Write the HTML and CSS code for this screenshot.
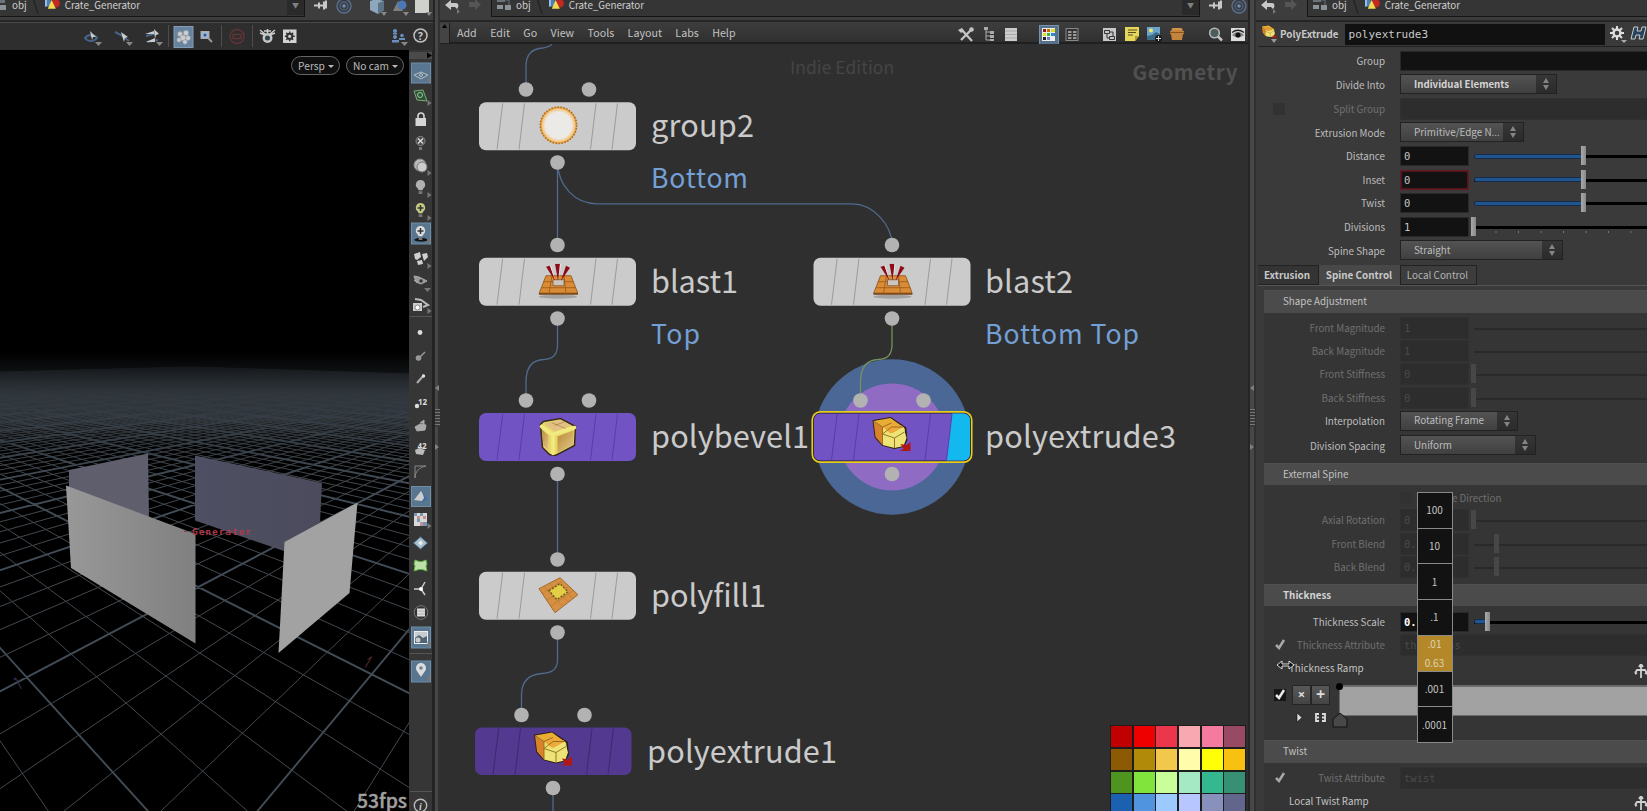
FILE: index.html
```html
<!DOCTYPE html>
<html lang="en">
<head>
<meta charset="utf-8">
<title>Crate_Generator</title>
<link rel="stylesheet" href="styles.css">
</head>
<body>
<svg class="defs" width="0" height="0">
  <defs>
    <linearGradient id="fade" x1="0" y1="300" x2="0" y2="430" gradientUnits="userSpaceOnUse">
      <stop offset="0" stop-color="#000"/><stop offset=".32" stop-color="#777"/><stop offset=".6" stop-color="#bbb"/><stop offset="1" stop-color="#fff"/>
    </linearGradient>
    <mask id="fadeMask" maskUnits="userSpaceOnUse" x="0" y="0" width="409" height="761"><rect width="409" height="761" fill="url(#fade)"/></mask>
    <linearGradient id="wallL"><stop offset="0" stop-color="#989898"/><stop offset="1" stop-color="#808080"/></linearGradient>
    <linearGradient id="wallB"><stop offset="0" stop-color="#4f4f63"/><stop offset="1" stop-color="#4b4b5d"/></linearGradient>
    <linearGradient id="gold" x1="0" y1="0" x2="1" y2="1"><stop offset="0" stop-color="#b98a34"/><stop offset="1" stop-color="#e3c88c"/></linearGradient>
    <radialGradient id="glow"><stop offset=".72" stop-color="#eceae6"/><stop offset=".88" stop-color="#f3c98a"/><stop offset="1" stop-color="#df8a20"/></radialGradient>
    <symbol id="i-geo" viewBox="0 0 18 16"><rect x="1" y="0" width="6" height="9" fill="#4f7fb8"/><path d="M1 0h2v9H1z" fill="#9cc0e8"/><circle cx="12.500" cy="5.500" r="4.500" fill="#c02a20"/><path d="M8 2l4.500 9.500H4z" fill="#f0dc50"/></symbol>
    <symbol id="i-obj" viewBox="0 0 16 14"><rect x="1" y="0" width="8" height="4" fill="#68747a"/><rect x="1" y="7" width="6" height="4" fill="#8a9296"/><rect x="9" y="7" width="6" height="5" fill="#8a9296"/><path d="M9 2h4v5" stroke="#68747a" fill="none"/></symbol>
    <symbol id="i-back" viewBox="0 0 16 14"><path d="M0 5l6-5v3h5c3 0 3 4 1 6l-2-2H6v3z" fill="#c8c8c8"/><path d="M12 9l3 2.500-3 2.500z" fill="#777"/></symbol>
    <symbol id="i-fwd" viewBox="0 0 14 12"><path d="M13 5.500L7 0v3H1v5h6v3z" fill="#555"/></symbol>
    <symbol id="i-pin" viewBox="0 0 14 10"><path d="M0 5h5M5 2v6M5 5h5M10 1v8M12 0v8" stroke="#c8c8c8" stroke-width="2"/></symbol>
    <symbol id="i-link" viewBox="0 0 16 16"><circle cx="8" cy="8" r="7" fill="none" stroke="#5c7498" stroke-width="1.300"/><circle cx="8" cy="8" r="4" fill="none" stroke="#4c6488" stroke-width="1.300"/><circle cx="8" cy="8" r="1.800" fill="#6b8ab8"/></symbol>
    <symbol id="i-extr" viewBox="0 0 40 36"><path d="M2 4L19 1l15 10 1 12-3 6-9 2-12-3-7-8z" fill="#eee070" stroke="#2a2010" stroke-width="1.800"/><path d="M2 4l9 6v18l-7-8z" fill="#d9822a"/><path d="M2 4L19 1l14 10-12-1-10 0z" fill="#e9ac34"/><path d="M11 10l10-4 10 3 2 4-12 5z" fill="#efa93a"/><path d="M11 17l10-1 11-6 3 11-3 8-9 2-12-3z" fill="#ede376"/><path d="M11 17l12 4 10-6M23 21v10M11 10v18M2 4l9 6 9-4M11 17l9-7 12 0" fill="none" stroke="#8a6a20" stroke-width=".9"/><path d="M29 27l6 1 4-3v9H28l4-2z" fill="#b01818"/></symbol>
    <symbol id="i-blast" viewBox="0 0 40 36"><ellipse cx="20" cy="33" rx="19" ry="2" fill="#a2a2a2"/><path d="M8 12h25l7 18H1z" fill="#d98b35" stroke="#8a5018" stroke-width=".8"/><path d="M1 29h39v2H1z" fill="#7c4a1c"/><path d="M5.500 18h30M3.500 24h34M14 12l-3 18M26 12l2 18" stroke="#a35e1a" stroke-width=".9" fill="none"/><path d="M15 16h11v6H15z" fill="#cdc4bc" stroke="#7a5a40" stroke-width=".8"/><path d="M8 3l4-1 5 15zM17 0h5l-2 17zM28 2l4 2-9 13z" fill="#8d0b18"/><path d="M12 2l1 0 4 14zM22 0h1l-2 16z" fill="#f3e6e6"/></symbol>
    <symbol id="i-bulb" viewBox="0 0 14 18"><path d="M7 1a5 5 0 0 1 3 9l-1 2H5l-1-2A5 5 0 0 1 7 1z" fill="currentColor"/><path d="M5 13h4v3H5z" fill="#777"/></symbol>
    <symbol id="i-ramp" viewBox="0 0 14 14"><path d="M7 0v14M5 3l2-3 2 3M1 9l2-3h8l2 3M1 10l2-1M13 10l-2-1" stroke="#d0d0d0" stroke-width="1.800" fill="none"/></symbol>
  </defs>
</svg>

<div class="app">
  <section class="pane view-pane">
    <header class="path">
      <div class="path-field left"><svg width="8" height="14"><rect y="1" width="5" height="4" fill="#68747a"/><rect y="7" width="6" height="5" fill="#8a9296"/></svg><span class="p-obj">obj</span><i class="chev"></i><svg width="17" height="15"><use href="#i-geo"/></svg><span>Crate_Generator</span><b class="drop">▼</b></div>
      <svg class="pin" width="14" height="11"><use href="#i-pin"/></svg>
      <svg class="lnk" width="16" height="16"><use href="#i-link"/></svg>
      <svg class="cubes" width="64" height="16"><path d="M1 1l6-2 8 2v9l-6 4-8-4z" fill="#8fa7bd"/><path d="M9 3v11l6-4V1z" fill="#5c7487"/><path d="M12 12h6l-3 4z" fill="#888"/><path d="M24 11l5-10 5 10z" fill="#808080"/><circle cx="33" cy="5" r="4.500" fill="#4b79b8"/><path d="M34 12h6l-3 4z" fill="#888"/><path d="M46 0h14v13H46z" fill="#d0d0cc"/><path d="M57 12h6l-3 4z" fill="#888"/></svg>
    </header>
    <div class="viewbar">
      <svg width="353" height="28" viewBox="80 22 353 28">
        <g fill="none" stroke="#486488" stroke-width="2"><path d="M85 38c3-4 10-4 12 0-3 4-9 4-12 0z"/><path d="M115 32l6 3 8 6"/><path d="M146 36l12-3M147 42l11-2"/></g>
        <g fill="#ccc"><path d="M90 31l6 6-3 0-1 3zM121 32l7 5-3 1-1 4zM154 29l5 5-3 1-1 4zM145 34l9-3v3zM146 42l9-4v4z"/></g>
        <g fill="#888"><path d="M95 42h7l-3.500 4zM126 42h7l-3.500 4zM156 42h7l-3.500 4zM401 42h7l-3.500 4z"/></g>
        <path d="M168.500 25v22M221.500 25v22M252.500 25v22" stroke="#4e4e4e"/>
        <rect x="174" y="26.500" width="19" height="21" fill="#66839f" stroke="#829db5"/>
        <g fill="#ccc" stroke="#8a98a4" stroke-width=".6"><circle cx="180" cy="34" r="2.500"/><circle cx="186" cy="33" r="2.700"/><circle cx="183" cy="38" r="3"/><circle cx="188" cy="38" r="2.500"/><circle cx="179" cy="40" r="2.200"/><circle cx="185" cy="42" r="2.300"/></g>
        <rect x="201" y="31.500" width="8" height="7" fill="#9fb6d0" stroke="#aaa"/><circle cx="205" cy="35" r="1.500" fill="#305888"/><path d="M208 38l4 4" stroke="#999" stroke-width="2"/>
        <circle cx="237" cy="36.500" r="7" fill="none" stroke="#5f3436" stroke-width="1.500"/><rect x="233" y="34.500" width="8" height="4" fill="none" stroke="#5f3436" stroke-width="1.500"/>
        <circle cx="267.500" cy="38" r="5" fill="#c5c5c5"/><circle cx="267.500" cy="38" r="2.500" fill="#2c4450"/><path d="M260 30l5 4M275 30l-5 4M260 33l5 2M275 33l-5 2M264 31h7M267.500 29v4" stroke="#ccc" stroke-width="1.500"/>
        <rect x="283" y="29.500" width="13.500" height="13.500" fill="#d2d2d2"/><circle cx="289.700" cy="36.300" r="2.600" fill="none" stroke="#333" stroke-width="2"/><path d="M289.700 31.500v2M289.700 39.300v2M284.900 36.300h2M292.700 36.300h2M286.300 32.900l1.500 1.500M291.600 38.200l1.500 1.500M293.100 32.900l-1.500 1.500M287.800 38.200l-1.500 1.500" stroke="#333" stroke-width="1.500"/>
        <g fill="#6b8fc0"><circle cx="395" cy="31" r="2"/><circle cx="395" cy="37" r="2"/><circle cx="402" cy="35.500" r="1.800"/><path d="M392 40h7v2.500h-7zM399 38h6v2h-6zM393 33h4v1.500h-4z"/></g>
        <circle cx="420.500" cy="35.500" r="6.500" fill="#333" stroke="#c0c0c0" stroke-width="1.500"/><text x="420.500" y="39.500" class="q">?</text>
      </svg>
    </div>
    <div class="view-row">
      <div class="viewport">
        <svg width="409" height="761">
          <defs><linearGradient id="haze" x1="0" y1="0" x2="0" y2="1"><stop offset="0" stop-color="#000"/><stop offset=".45" stop-color="#202326"/><stop offset=".65" stop-color="#1e2227"/><stop offset="1" stop-color="#000"/></linearGradient></defs>
          <rect y="302" width="409" height="98" fill="url(#haze)"/>
          <g mask="url(#fadeMask)"><path id="minor" class="g-minor"/><path id="major" class="g-major"/></g>
          <g transform="translate(0,-50)">
            <path d="M69 470L148 453.500 149 517 69 500z" fill="#5f5e6d"/>
            <path d="M195 455.500L322 483 320 522 284 551 195 520.500z" fill="url(#wallB)"/>
            <path d="M66 485.500L195.500 534v109.500L71 568z" fill="url(#wallL)"/>
            <path d="M284.500 542L357.500 502.500 349.500 593 278.500 653z" fill="#a2a2a2"/>
            <text x="192" y="535" class="gen" textLength="59">Generator</text><path d="M184 531.500h3" stroke="#a33040"/>
            <text class="ax red" transform="translate(361,668) rotate(-8) skewX(-38)">1</text>
            <text class="ax pur" transform="translate(17,688) rotate(10) skewX(38)">1</text>
            <text x="357" y="808" class="fps" textLength="50" lengthAdjust="spacingAndGlyphs">53fps</text>
          </g>
        </svg>
        <div class="pills"><span>Persp<i></i></span><span>No cam<i></i></span></div>
      </div>
      <div class="sidebar">
        <svg width="24" height="761" viewBox="409 50 24 761">
          <rect x="409" y="52" width="23" height="7" fill="#4a4a4a"/><path d="M427 52.500l5 3-5 3z" fill="#000"/>
          <g fill="#58768f" stroke="#6d8da8"><rect x="411.500" y="63" width="19" height="20"/><rect x="411.500" y="223" width="19" height="21"/><rect x="411.500" y="486.500" width="19" height="20"/><rect x="411.500" y="627" width="19" height="21"/><rect x="411.500" y="661" width="19" height="21"/></g>
          <path d="M410 316.500h22M410 653.500h22M410 791.500h22" stroke="#555"/>
          <g fill="none" stroke="#b8bcc0"><path d="M414 75l7-3 7 3-7 4z"/><circle cx="421" cy="75" r="1.500"/></g>
          <path d="M414 91l9-1 4 11-10-1z" fill="#31503a" stroke="#77ab70"/><circle cx="420" cy="95" r="2.500" fill="none" stroke="#9c9"/>
          <rect x="415.500" y="118" width="10.500" height="8" fill="#d4d4d4"/><path d="M418 118v-2a3 3 0 0 1 6 0v2" fill="none" stroke="#d4d4d4" stroke-width="1.600"/>
          <circle cx="420.500" cy="141" r="4.500" fill="#4a4a4a" stroke="#888"/><path d="M418 138.500l5 5M423 138.500l-5 5" stroke="#ddd" stroke-width="1.400"/><path d="M419 147h3v3h-3z" fill="#777"/>
          <circle cx="420" cy="165" r="6" fill="#bbb" stroke="#888"/><circle cx="422" cy="167" r="5" fill="#ccc" stroke="#777"/>
          <g color="#b0b0b0"><use href="#i-bulb" x="414" y="179" width="13" height="17"/></g>
          <g color="#c6cb84"><use href="#i-bulb" x="414" y="202" width="13" height="17"/></g><path d="M420.500 205v6M417.500 208h6" stroke="#333" stroke-width="1.500"/>
          <path d="M414 240c3-3 11-3 14 0-3 2-11 2-14 0z" fill="#111"/><g color="#ddd"><use href="#i-bulb" x="414" y="225" width="13" height="17"/></g><path d="M420.500 228v6M417.500 231h6" stroke="#333" stroke-width="1.500"/>
          <path d="M414 254l6-2 1 5-4 3-2-1zM422 254l5-1 1 4-4 4zM417 261l5-1 1 4-5 1z" fill="#d0d0d0"/>
          <path d="M414 276l5 1 8 4-6 3-5-2zM414 280l4 3" fill="#999" stroke="#aaa"/><circle cx="421" cy="281" r="1.700" fill="#333"/>
          <path d="M413 303h9v8h-9z" fill="#ccc"/><path d="M415 299l6 1 7 5-5 2" fill="none" stroke="#bbb" stroke-width="2"/><circle cx="417.500" cy="307.500" r="2.500" fill="#fff" stroke="#888"/>
          <circle cx="420" cy="332.500" r="2.400" fill="#ddd"/>
          <path d="M425 352l-5 5" stroke="#999" stroke-width="1.500"/><circle cx="418.500" cy="358" r="2.800" fill="#999"/>
          <path d="M417 383l7-8" stroke="#aaa" stroke-width="2"/><circle cx="423.500" cy="376" r="1.700" fill="#ddd"/>
          <text x="418" y="405" class="num">12</text><circle cx="417" cy="406" r="2.200" fill="#ddd"/>
          <path d="M415 427l5-3 6 1-1 5-8 1zM420 423l4-3v4" fill="#aaa" stroke="#aaa"/>
          <text x="417.500" y="449" class="num">42</text><path d="M415 450l4-2 6 2-2 5-7-1z" fill="#bbb"/>
          <path d="M415 478v-12h11M415 478c0-7 5-11 11-12" fill="none" stroke="#888"/>
          <path d="M414 500l7-9 5 8-4 2z" fill="#ccc"/><path d="M422 491l5 8-4 3-1-1 2-3z" fill="#3f6ca4"/>
          <rect x="414" y="513" width="13" height="13" fill="#d8d8d8"/><g fill="#7794b4"><path d="M414 513h3v3h-3zM420 513h3v3h-3zM417 519h3v3h-3zM423 522h4v4h-4z"/></g><path d="M417 516h3v3h-3zM423 516h3v3h-3zM420 522h3v4h-3z" fill="#c29292"/>
          <path d="M420.500 537l7 6-7 6-7-6z" fill="#a9bfcd" stroke="#4f7694"/><path d="M418 543l2.500-2.500 2.500 2.500-2.500 2.500z" fill="#eee"/>
          <path d="M415 560l4 1.500h3l4-1.500 1 4-1 2 1 5-5-1.500h-3l-5 1.500 1-5-1-2z" fill="#bde0a8" stroke="#5fae40"/>
          <path d="M421 589l4-7M421 589l4 6M421 589h-7" stroke="#ccc" stroke-width="1.500"/><circle cx="421" cy="589" r="2" fill="#fff"/>
          <circle cx="421" cy="612.500" r="6.800" fill="#333" stroke="#777"/><path d="M417 608.500h8v8h-8z" fill="#ddd"/><path d="M417 611h8M417 614h8" stroke="#999" stroke-width=".7"/>
          <rect x="414.500" y="631.500" width="13" height="12" fill="#c6ccd0" stroke="#eee"/><path d="M415 638l4-3 4 3 4-2v7h-12z" fill="#4f6474"/><circle cx="418" cy="640" r="2.500" fill="#ccc"/>
          <path d="M421 677c-3-5-5-6-5-9a5 5 0 0 1 10 0c0 3-2 4-5 9z" fill="#ddd"/><circle cx="421" cy="668" r="1.800" fill="#68849c"/>
          <circle cx="420.500" cy="805.500" r="6.200" fill="#333" stroke="#bbb" stroke-width="1.400"/><text x="420.500" y="809.500" class="info">i</text>
          <g fill="#777"><path d="M427.500 77l4 3-4 3zM427.500 100l4 3-4 3zM427.500 170l4 3-4 3zM427.500 192l4 3-4 3zM427.500 215l4 3-4 3zM427.500 238l4 3-4 3zM427.500 263l4 3-4 3zM424 288h7l-3.500 4zM427.500 308l4 3-4 3zM427.500 523l4 3-4 3zM427.500 641l4 3-4 3zM427.500 675l4 3-4 3z"/></g>
        </svg>
      </div>
    </div>
  </section>

  <div class="split"><i class="nub left"></i><span class="grip"></span><i class="nub right"></i></div>

  <section class="pane net-pane">
    <header class="path">
      <svg class="back" width="16" height="14"><use href="#i-back"/></svg><svg class="fwd" width="14" height="12"><use href="#i-fwd"/></svg>
      <div class="path-field"><svg width="16" height="14"><use href="#i-obj"/></svg><span class="p-obj">obj</span><i class="chev"></i><svg width="17" height="15"><use href="#i-geo"/></svg><span>Crate_Generator</span><b class="drop">▼</b></div>
      <svg class="pin" width="14" height="11"><use href="#i-pin"/></svg>
      <svg class="lnk" width="16" height="16"><use href="#i-link"/></svg>
    </header>
    <nav class="menu">
      <i class="handle">▲</i>
      <span>Add</span><span>Edit</span><span>Go</span><span>View</span><span>Tools</span><span>Layout</span><span>Labs</span><span>Help</span>
      <svg class="tools" width="298" height="22" viewBox="950 22 298 22">
        <path d="M961 28l11 12M972 28l-11 11" stroke="#c4c4c4" stroke-width="2.300"/><path d="M958 29l4-2 2 3-3 2z" fill="#c4c4c4"/><circle cx="971.500" cy="28.500" r="2.300" fill="#c4c4c4"/>
        <path d="M986 27v12h4M986 31h4M986 35h4" stroke="#aaa" fill="none"/><path d="M984 26h4v3h-4zM990 30h4v3h-4zM990 34h4v3h-4zM990 38h4v2h-4z" fill="#aaa"/>
        <path d="M1005 27h12v13h-12z" fill="#ccc"/><path d="M1005 30h12M1005 33.500h12M1005 37h12" stroke="#aaa"/>
        <rect x="1039.500" y="24.500" width="19" height="19" fill="#55718b" stroke="#7793ab"/><path d="M1042 27h13v13h-13z" fill="#eee"/>
        <path d="M1043 28h3v3h-3z" fill="#911"/><path d="M1047 28h3v3h-3z" fill="#c60"/><path d="M1051 28h4v3h-4zM1043 32h3v3h-3z" fill="#dd2"/><path d="M1047 32h3v3h-3z" fill="#3b3"/><path d="M1051 32h4v3h-4z" fill="#38c"/><path d="M1043 36h3v3h-3z" fill="#222"/><path d="M1047 36h3v3h-3z" fill="#77c"/>
        <rect x="1066" y="27.500" width="12" height="12" fill="#333" stroke="#888"/><path d="M1068 30h3.500v2h-3.500zM1073 30h3.500v2h-3.500zM1068 33h3.500v2h-3.500zM1073 33h3.500v2h-3.500zM1068 36h3.500v2h-3.500zM1073 36h3.500v2h-3.500z" fill="#999"/>
        <path d="M1103 27h13v13h-13z" fill="#c8c8c8"/><path d="M1104.500 29.500h5v3h-5zM1109.500 35.500h5v3h-5zM1110 31h3v4M1107 33v4h2" stroke="#333" fill="none"/>
        <path d="M1125 26h14v9l-4 5h-10z" fill="#e4d75a"/><path d="M1128 29h9M1128 31.500h8M1128 34h5" stroke="#554d20"/><path d="M1135 40v-5h4z" fill="#aa9d30"/>
        <path d="M1147 26h13v13h-13z" fill="#6ba4cc"/><path d="M1147 35l5-1 4-3 4 2v6h-13z" fill="#3c6b87"/><circle cx="1151" cy="29.500" r="2" fill="#f2e765"/><circle cx="1158.500" cy="37.500" r="3.500" fill="#181818"/><path d="M1156 37.500h5M1158.500 35v5" stroke="#ddd"/>
        <path d="M1172 27h10l1 3h1v3h-1l-1 6h-10l-1-6h-1v-3h1z" fill="#c3843c"/><path d="M1170 31.500h14" stroke="#8a5420"/><path d="M1173 28h8" stroke="#e0a560"/>
        <circle cx="1214.500" cy="32" r="4.800" fill="#4b5d5d" stroke="#b8b8b8" stroke-width="1.600"/><path d="M1218 35.500l4 4" stroke="#c5c5c5" stroke-width="2.500"/>
        <path d="M1231 27h14v13h-14z" fill="#ddd"/><path d="M1232 34c3-4 9-4 12 0-3 3-9 3-12 0z" fill="#888"/><path d="M1232 31.500c4-3 8-3 12 0" stroke="#222" stroke-width="1.300" fill="none"/><circle cx="1238" cy="34" r="2.600" fill="#111"/>
      </svg>
    </nav>
    <div class="canvas">
      <svg class="graph" width="808" height="767" viewBox="440 44 808 767">
        <defs>
          <g id="marks"><path d="M23.700 1L18 47M45.500 1L40 47M117 1l-5.500 46M138.500 1L133 47"/></g>
          <g id="cube">
            <path d="M2 7L5 4 22 1l15 8-1 19L17 38l-6-1-7-7z" fill="#e9d768" stroke="#3a2a18" stroke-width="1.500"/>
            <path d="M6 6L22 2.500 33 8 16 14z" fill="#e2c184"/>
            <path d="M19 19l16-6v14l-16 8z" fill="url(#gold)"/>
            <path d="M3.500 12l6.500 6v15l-5-5z" fill="url(#gold)"/>
            <path d="M3 9l11 8 22-7M14.500 18v18" stroke="#f1ea80" stroke-width="3.600" fill="none" stroke-linecap="round"/>
            <path d="M13 5l14 6M27 4l-11 4" stroke="#9a7838" stroke-width=".6"/>
          </g>
        </defs>
        <text x="790" y="74" class="indie" textLength="104">Indie Edition</text>
        <text x="1132.500" y="79.500" class="geo" textLength="105">Geometry</text>
        <circle cx="892" cy="437" r="77.700" fill="#4a6796"/><circle cx="892" cy="437" r="53.500" fill="#8f6bc4"/>
        <g class="wire">
          <path d="M526 89V66Q526 49 543 48Q550 47 552 44"/>
          <path d="M557.500 162V245"/><path d="M557.500 162C558 186 575 203.800 597 203.800H852C873 203.800 892 225 892 245"/>
          <path d="M557.500 318V345Q557.500 359 544 359.500Q526 360 526 382V400"/>
          <path d="M557.500 474V560"/>
          <path d="M557.500 632V660Q557.500 673 542 673.500Q521.500 675 521.500 695V715"/>
          <path d="M553 788V811"/>
          <path class="green" d="M892 318V345Q892 359 878.500 359.500Q860.500 360 860.500 382V400"/>
        </g>
        <g class="dots">
          <circle cx="526" cy="89.500" r="7.300"/><circle cx="589" cy="89.500" r="7.300"/><circle cx="557.500" cy="162.500" r="7.300"/>
          <circle cx="557.500" cy="245" r="7.300"/><circle cx="557.500" cy="318.500" r="7.300"/>
          <circle cx="892" cy="245" r="7.300"/><circle cx="892" cy="318.500" r="7.300"/>
          <circle cx="526" cy="400.500" r="7.300"/><circle cx="589" cy="400.500" r="7.300"/><circle cx="557.500" cy="474" r="7.300"/>
          <circle cx="860.500" cy="400.500" r="7.300"/><circle cx="923.500" cy="400.500" r="7.300"/><circle cx="892" cy="474" r="7.300"/>
          <circle cx="557.500" cy="559.500" r="7.300"/><circle cx="557.500" cy="632.500" r="7.300"/>
          <circle cx="521.500" cy="715" r="7.300"/><circle cx="584.500" cy="715" r="7.300"/><circle cx="553" cy="788" r="7.300"/>
        </g>
        <g class="node light" transform="translate(479,102.300)"><rect width="157" height="48" rx="7"/><use class="m" href="#marks"/><circle cx="79.500" cy="23" r="18.300" fill="url(#glow)"/><circle cx="79.500" cy="23" r="18.200" fill="none" stroke="#b0701c" stroke-width="1.600" stroke-dasharray="1.500 1.500"/></g>
        <g class="node light" transform="translate(479,257.700)"><rect width="157" height="48" rx="7"/><use class="m" href="#marks"/><use href="#i-blast" x="59" y="6" width="40" height="36"/></g>
        <g class="node light" transform="translate(813.500,257.700)"><rect width="157" height="48" rx="7"/><use class="m" href="#marks"/><use href="#i-blast" x="59" y="6" width="40" height="36"/></g>
        <g class="node violet" transform="translate(479,413)"><rect width="157" height="48" rx="7"/><use class="m" href="#marks"/><use href="#cube" x="59.500" y="4.500"/></g>
        <g class="node violet" transform="translate(813.500,413)"><rect x="-1.200" y="-1.200" width="159.400" height="50.400" rx="8" class="sel"/><rect x=".5" y=".5" width="156" height="47" rx="6"/><path d="M138.500 .5H150a6.500 6.500 0 0 1 6.500 6.500v34a6.500 6.500 0 0 1-6.500 6.500h-17z" class="flag"/><use class="m" href="#marks"/><use href="#i-extr" x="58" y="4" width="40" height="36"/></g>
        <g class="node light" transform="translate(479,571.700)"><rect width="157" height="48" rx="7"/><use class="m" href="#marks"/><path d="M60 17L81 6l18 17-23 18z" fill="#d59043" stroke="#a36a2c"/><path d="M65 15l18 19M71 12l18 18M77 9l17 18M63 22l20-12M67 29l22-14M71 35l23-16" stroke="#b87730" stroke-width=".7"/><path d="M70 19l11-7 8 8-11 8z" fill="#e3cf45" stroke="#775b18" stroke-width="1.500" stroke-dasharray="2 1.500"/></g>
        <g class="node dark" transform="translate(475,727.500)"><rect width="156.500" height="47.500" rx="7"/><use class="m" href="#marks"/><use href="#i-extr" x="58" y="4" width="40" height="36"/></g>
        <g class="name">
          <text x="651" y="137.300" textLength="103">group2</text><text x="651" y="292.500" textLength="87">blast1</text><text x="985" y="292.500" textLength="88">blast2</text>
          <text x="651" y="447.700" textLength="158">polybevel1</text><text x="985" y="447.700" textLength="191">polyextrude3</text><text x="651" y="606.700" textLength="115">polyfill1</text><text x="647" y="762.500" textLength="190">polyextrude1</text>
        </g>
        <g class="note"><text x="651" y="187.700" textLength="97">Bottom</text><text x="651" y="343.500" textLength="49">Top</text><text x="985" y="343.500" textLength="154">Bottom Top</text></g>
      </svg>
      <div class="palette">
        <i style="background:#c00000"></i><i style="background:#ee0000"></i><i style="background:#ec364c"></i><i style="background:#f8a8b0"></i><i style="background:#f47aa0"></i><i style="background:#984a64"></i>
        <i style="background:#8c5a04"></i><i style="background:#b08a08"></i><i style="background:#f2c84c"></i><i style="background:#fffcac"></i><i style="background:#ffff08"></i><i style="background:#f8c010"></i>
        <i style="background:#509420"></i><i style="background:#80e43c"></i><i style="background:#c8ff98"></i><i style="background:#a4e8c4"></i><i style="background:#34b890"></i><i style="background:#389074"></i>
        <i style="background:#1c60b0"></i><i style="background:#5094e0"></i><i style="background:#9ccaff"></i><i style="background:#b8c6ff"></i><i style="background:#8890bc"></i><i style="background:#62668c"></i>
      </div>
    </div>
  </section>

  <div class="split"><i class="nub left"></i><span class="grip"></span><i class="nub right"></i></div>

  <section class="pane parm-pane">
    <header class="path">
      <svg class="back" width="16" height="14"><use href="#i-back"/></svg><svg class="fwd" width="14" height="12"><use href="#i-fwd"/></svg>
      <div class="path-field open"><svg width="16" height="14"><use href="#i-obj"/></svg><span class="p-obj">obj</span><i class="chev"></i><svg width="17" height="15"><use href="#i-geo"/></svg><span>Crate_Generator</span></div>
    </header>
    <div class="title">
      <svg class="op" width="18" height="18"><use href="#i-extr" x="0" y="0" width="16" height="14"/><path d="M10 14h6l-3 4z" fill="#999"/></svg>
      <b>PolyExtrude</b><span class="opname">polyextrude3</span>
      <svg width="40" height="20"><circle cx="10" cy="9" r="3.500" fill="none" stroke="#ddd" stroke-width="2.500"/><path d="M10 2v3M10 13v3M3 9h3M14 9h3M5 4l2 2M13 12l2 2M15 4l-2 2M7 12l-2 2" stroke="#ddd" stroke-width="2"/><path d="M14 16h6l-3 3z" fill="#aaa"/><path d="M27 3h4l-1 4h4l1-4h4l-3 12h-4l1-4h-4l-1 4h-4z" fill="#25425e" stroke="#ccc"/></svg>
    </div>

    <div class="rows top">
      <div class="row h23"><label>Group</label><span class="field wide"></span></div>
      <div class="row h24"><label>Divide Into</label><span class="combo w156 strong">Individual Elements<i></i></span></div>
      <div class="row h24 off"><em class="box"></em><label>Split Group</label><span class="field wide"></span></div>
      <div class="row h24"><label>Extrusion Mode</label><span class="combo w123">Primitive/Edge N...<i></i></span></div>
      <div class="row h235"><label>Distance</label><span class="field">0</span><span class="slider"><u class="full"></u><s class="at110"></s></span></div>
      <div class="row h235"><label>Inset</label><span class="field alert">0</span><span class="slider"><u class="full"></u><s class="at110"></s></span></div>
      <div class="row h235"><label>Twist</label><span class="field">0</span><span class="slider"><u class="full"></u><s class="at110"></s></span></div>
      <div class="row h235"><label>Divisions</label><span class="field">1</span><span class="slider ticks"><s></s></span></div>
      <div class="row h24"><label>Spine Shape</label><span class="combo w162">Straight<i></i></span></div>
    </div>
    <div class="tabs"><b>Extrusion</b><b class="on">Spine Control</b><span>Local Control</span></div>
    <div class="fold">
      <h3>Shape Adjustment</h3>
      <div class="rows sec">
        <div class="row off"><label>Front Magnitude</label><span class="field">1</span><span class="slider"></span></div>
        <div class="row off"><label>Back Magnitude</label><span class="field">1</span><span class="slider"></span></div>
        <div class="row off"><label>Front Stiffness</label><span class="field">0</span><span class="slider"><s></s></span></div>
        <div class="row off"><label>Back Stiffness</label><span class="field">0</span><span class="slider"><s></s></span></div>
        <div class="row h243"><label>Interpolation</label><span class="combo w117">Rotating Frame<i></i></span></div>
        <div class="row h243"><label>Division Spacing</label><span class="combo w135">Uniform<i></i></span></div>
      </div>
      <h3>External Spine</h3>
      <div class="rows ext">
        <div class="row h215 off"><label></label><em class="box inline"></em><span class="dir">e Direction</span></div>
        <div class="row off"><label>Axial Rotation</label><span class="field">0</span><span class="slider"><s></s></span></div>
        <div class="row off"><label>Front Blend</label><span class="field">0.</span><span class="slider"><s class="at22"></s></span></div>
        <div class="row off"><label>Back Blend</label><span class="field">0.</span><span class="slider"><s class="at22"></s></span></div>
      </div>
      <h3 class="bold">Thickness</h3>
      <div class="rows thick">
        <div class="row"><label>Thickness Scale</label><span class="field strong">0.</span><span class="slider"><u class="short"></u><s class="at14"></s></span></div>
        <div class="row off"><em class="box check"><svg width="12" height="12"><path d="M2 6l3 3 5-8" fill="none" stroke="#a8a8a8" stroke-width="2.500"/></svg></em><label>Thickness Attribute</label><span class="field wide">thickness</span></div>
        <div class="row ramp-title"><span>Thickness Ramp</span><svg width="14" height="14"><use href="#i-ramp"/></svg></div>
        <div class="ramp">
          <div class="ramp-tools">
            <div class="ramp-line"><em class="box black"><svg width="12" height="12"><path d="M2 6l3 3 5-8" fill="none" stroke="#e8e8e8" stroke-width="2.500"/></svg></em><span class="btn">×</span><span class="btn plus">+</span></div>
            <svg class="ramp-icons" width="60" height="14"><path d="M24 2l5 4.500-5 4.500z" fill="#ddd" stroke="#111" stroke-width=".6"/><path d="M46 3h-3v7h3M49 3h3v7h-3" fill="none" stroke="#ddd" stroke-width="1.800"/><path d="M44 6.500h2M49 6.500h2" stroke="#ddd" stroke-width="2"/></svg>
          </div>
          <div class="ramp-bar"><i></i><svg width="16" height="16"><path d="M1 6l7-6 7 6v8H1z" fill="#484848" stroke="#111"/></svg></div>
        </div>
      </div>
      <h3>Twist</h3>
      <div class="rows sec">
        <div class="row off"><em class="box check"><svg width="12" height="12"><path d="M2 6l3 3 5-8" fill="none" stroke="#a8a8a8" stroke-width="2.500"/></svg></em><label>Twist Attribute</label><span class="field wide">twist</span></div>
        <div class="row ramp-title"><span>Local Twist Ramp</span><svg width="14" height="14"><use href="#i-ramp"/></svg></div>
      </div>
    </div>
    <div class="ladder"><span>100</span><span>10</span><span>1</span><span>.1</span><span class="hot"><b>.01</b><b>0.63</b></span><span>.001</span><span>.0001</span></div>
    <svg class="cursor" width="20" height="10"><path d="M1 5l5-4v3h7V1l5 4-5 4V6H6v3z" fill="#111" stroke="#ddd"/></svg>
  </section>
</div>
<script src="grid.js"></script>
</body>
</html>
```

FILE: styles.css
```css
* { box-sizing: border-box; }
html, body { margin: 0; height: 100%; overflow: hidden; background: #3a3a3a; }
body { font: 9.8px/14px "Noto Sans CJK SC", "Noto Sans", sans-serif; color: #c4c4c4; }
.defs { position: absolute; }
svg { display: block; flex: none; }
i, em { font-style: normal; }
b { font-weight: 700; }

.app { display: flex; width: 1647px; height: 811px; background: #3a3a3a; }
.pane { display: flex; flex-direction: column; overflow: hidden; flex: none; }
.view-pane { width: 433px; }
.net-pane { width: 808px; }
.parm-pane { width: 391px; position: relative; }

.split { width: 7px; flex: none; background: #474747; border-left: 2px solid #252525; border-right: 2px solid #303030; padding-top: 385px; }
.net-pane + .split { width: 8px; }
.grip { display: block; width: 5px; height: 18px; background: repeating-linear-gradient(#777 0 1px, #3a3a3a 1px 3px); }
.nub { display: block; width: 4px; height: 6px; background: #808080; }
.nub.left { clip-path: polygon(100% 0, 100% 100%, 0 50%); margin-bottom: 18px; }
.nub.right { clip-path: polygon(0 0, 0 100%, 100% 50%); margin-top: 17px; }

/* path bar */
.path { display: flex; align-items: flex-start; height: 22px; flex: none; background: #3d3d3d; border-bottom: 2px solid #262626; }
.path-field { display: flex; align-items: flex-start; height: 17px; width: 290px; background: #353535; border: solid #151515; border-width: 0 1px 1px; }
.path-field span { line-height: 11px; color: #cfcfcf; }
.path-field svg { margin-top: -2px; }
.chev { width: 7px; height: 16px; margin: -2px 8px 0 2px; border: solid #1c1c1c; border-width: 0 1px 0 0; transform: skewX(18deg); }
.path-field .p-obj { margin-left: 4px; }
.path-field span:last-of-type { margin-left: 4px; }
.drop { margin-left: auto; width: 17px; height: 15px; background: #2a2a2a; color: #808080; font-size: 7px; line-height: 10px; text-align: center; }
.path-field.left { width: 306px; border-left: 0; }
.path .pin { margin: 0 0 0 9px; }
.path .lnk { margin: -2px 0 0 8px; }
.cubes { margin-left: 17px; }
.net-pane .path .back, .parm-pane .path .back { margin: 0 0 0 5px; }
.path .fwd { margin: -1px 9px 0 7px; }
.net-pane .path-field { width: 709px; padding-left: 4px; }
.parm-pane .path-field { width: 360px; padding-left: 4px; flex: none; }

/* viewport pane */
.viewbar { height: 28px; flex: none; padding-left: 80px; background: #2e2e2e; border-top: 1px solid #484848; }
.viewbar svg { margin-top: -1px; }
.view-row { display: flex; flex: 1; }
.viewport { width: 409px; background: #000; position: relative; overflow: hidden; }
.g-minor { stroke: #42494f; stroke-width: 1; fill: none; }
.g-major { stroke: #424c56; stroke-width: 1.9; fill: none; }
.pills { position: absolute; top: 6px; right: 5px; display: flex; gap: 6px; }
.pills span { height: 19px; border: 1px solid #666; border-radius: 10px; background: #101010; font-size: 10.2px; line-height: 15px; padding: 0 5px 1px 6px; display: flex; align-items: center; color: #bbb; }
.pills i { border: 3px solid transparent; border-top-color: #bbb; border-bottom: 0; margin: 2px 0 0 3px; }
.sidebar { width: 24px; background: #363636; border-right: 1px solid #222; }
.gen { font: bold 9.5px "DejaVu Sans Mono", monospace; fill: #b03848; }
.ax { font: 14px "Noto Sans", sans-serif; }
.red { fill: #5a2e30; }
.pur { fill: #383050; }
.fps { font: 500 19px "Noto Sans CJK SC", sans-serif; fill: #a0a0a0; stroke: #a0a0a0; stroke-width: .4; }
.q, .info { font: bold 10px "Noto Sans", sans-serif; fill: #ccc; text-anchor: middle; }
.info { font: italic bold 10px "Liberation Serif", serif; }
.num { font: bold 8px "Noto Sans", sans-serif; fill: #ddd; }

/* network pane */
.menu { display: flex; align-items: center; height: 22px; padding-top: 1px; flex: none; background: linear-gradient(#3d3d3d, #303030); border-bottom: 2px solid #1f1f1f; font-size: 10.7px; color: #c2c2c2; }
.menu span { margin-right: 13.4px; }
.handle { width: 10px; height: 20px; margin-right: 7px; border-right: 1px solid #1c1c1c; background: #444; font-size: 5px; line-height: 6px; color: #000; text-align: center; }
.tools { margin-left: auto; margin-bottom: -3px; }
.canvas { position: relative; flex: 1; background: #2f2f2f; overflow: hidden; }
.indie { font: 17.4px "Noto Sans CJK SC", sans-serif; fill: #454545; }
.geo { font: bold 20.5px "Noto Sans CJK SC", sans-serif; fill: #505050; }
.wire path { fill: none; stroke: #4f6a8c; stroke-width: 1.3; }
.wire .green { stroke: #76905e; }
.dots { fill: #b2b2b2; }
.node.light { fill: #cbcbcb; }
.node.light .m { stroke: #9b9b9b; }
.node.violet { fill: #7253c4; }
.node.violet .m { stroke: #5a3da6; }
.node.dark { fill: #53398f; }
.node.dark .m { stroke: #40296f; }
.node .sel { fill: #1c1630; stroke: #e8ce1c; stroke-width: 1.7; }
.node .flag { fill: #12b8ee; }
.name { font: 30.7px "Noto Sans CJK SC", sans-serif; fill: #cacaca; }
.note { font: 26.6px "Noto Sans CJK SC", sans-serif; fill: #74a0d6; }
.palette { position: absolute; left: 670px; top: 681px; display: grid; grid-template-columns: repeat(6, 21px); grid-auto-rows: 21px; gap: 1.8px 1.7px; padding: 1px; background: #1d1d1d; }

/* parameter pane */
.title { display: flex; align-items: center; height: 25px; flex: none; margin-left: 2px; border-bottom: 1px solid #202020; }
.title .op { margin-left: 3px; }
.title b { margin-left: 1px; color: #c8c8c8; width: 65px; white-space: nowrap; }
.opname { width: 262px; height: 21px; background: #111; padding-left: 4px; font: 11px/21px "DejaVu Sans Mono", monospace; color: #c8c8c8; margin-right: 2px; }
.row { display: flex; align-items: center; height: 23.3px; position: relative; white-space: nowrap; }
.row label { width: 129px; margin-right: 15px; text-align: right; color: #bdbdbd; flex: none; }
.rows.top { padding-top: 2px; }
.rows.top .h23 { margin-bottom: .5px; }
.fold { margin-left: 8px; margin-top: 4px; }
.fold .row label { width: 121px; }
.rows.sec { padding: 3.500px 0 5px; }
.rows.ext { padding: 2px 0 5px; }
.rows.thick { padding: 4px 0 0; height: 134px; }
.fold .rows { background: #353535; }
.h23 { height: 23px; } .h24 { height: 24px; } .h235 { height: 23.5px; } .h243 { height: 24.3px; } .h215 { height: 21.5px; }
.field { width: 69px; height: 20px; flex: none; background: #121212; border: 1px solid #292929; padding-left: 3px; font: 10.5px/18px "DejaVu Sans Mono", monospace; color: #c4c4c4; }
.field.wide { width: 260px; }
.field.alert { border: 1px solid #651820; outline: 1px solid #4a181d; outline-offset: -2px; }
.field.strong { font-weight: bold; color: #fff; }
.off label, .off .dir { color: #707070; }
.off .field { background: #2d2d2d; border-color: #303030; color: #4a4a4a; height: 22px; line-height: 20px; }
.slider { position: relative; width: 180px; height: 20px; margin-left: 5px; background: linear-gradient(#000, #000) 0 9px / 100% 3px no-repeat; }
.slider u { display: block; height: 5px; margin-top: 7.500px; border-radius: 2px; background: #20558f; border: 1px solid #172c48; }
.slider u.full { width: 110px; } .slider u.short { width: 14px; }
.slider s { position: absolute; top: 0; left: -3px; width: 5px; height: 19px; background: linear-gradient(90deg, #aaa, #888); }
.slider .at110 { left: 107px; } .slider .at22 { left: 20px; } .slider .at14 { left: 11px; }
.slider.ticks { background: linear-gradient(#000, #000) 0 9px / 100% 3px no-repeat, linear-gradient(90deg, transparent 21.500px, #777 21.500px) 0 14px / 22.500px 2px repeat-x; }
.off .slider { background: linear-gradient(#2a2a2a, #2a2a2a) 0 10px / 100% 2px no-repeat; }
.off .slider s { background: #474747; }
.combo { display: flex; align-items: center; height: 20px; padding-left: 13px; background: linear-gradient(#535353, #404040); border: 1px solid #222; color: #bdbdbd; margin-top: -1px; font-size: 9.9px; line-height: 12px; padding-bottom: 1px; }
.combo.strong { font-weight: 700; color: #d4d4d4; font-size: 9.7px; }
.combo i { margin-left: auto; width: 20px; height: 18px; margin-bottom: -1px; background: linear-gradient(#363636, #2b2b2b); display: grid; place-content: center; gap: 2px; }
.combo i::before, .combo i::after { content: ""; border: 3px solid transparent; }
.combo i::before { border-bottom: 5px solid #858585; border-top: 0; }
.combo i::after { border-top: 5px solid #858585; border-bottom: 0; }
.w156 { width: 157px; } .w123 { width: 124px; } .w162 { width: 163px; } .w117 { width: 118px; } .w135 { width: 136px; }
.box { position: absolute; left: 17px; width: 12px; height: 12px; background: #323232; }
.fold .box { left: 10px; }
.fold .box.inline { position: static; margin-right: 40px; }
.box.check { background: none; }
.tabs { display: flex; height: 21px; margin: 2.500px 0 0 2px; flex: none; border-bottom: 1px solid #555; font-size: 9.9px; line-height: 19px; }
.tabs > * { border: 1px solid #222; border-left-width: 0; background: #343434; text-align: center; height: 20px; color: #c8c8c8; white-space: nowrap; }
.tabs b:first-child { width: 61px; padding-right: 2px; } .tabs .on { width: 81px; background: #484848; border-color: #484848; } .tabs span { width: 77px; border-left-width: 1px; background: #3d3d3d; color: #b4b4b4; padding-right: 2px; }
h3 { margin: 0; height: 22.5px; padding-left: 19px; background: #4b4b4b; font: 400 9.8px/21px "Noto Sans CJK SC", sans-serif; color: #c2c2c2; border-top: 1px solid #505050; }
h3.bold { font-weight: 700; color: #d4d4d4; }
.ramp-title { padding-left: 25px; }
.ramp-title svg { position: absolute; left: 370px; top: 7px; }
.ramp { display: flex; margin-top: 3px; }
.ramp-tools { width: 78px; }
.ramp-line { display: flex; height: 22px; align-items: center; padding: 2px 0 0 10px; }
.fold .box.black { position: static; background: #151515; margin-right: 6px; }
.btn { width: 19px; height: 20px; background: linear-gradient(#585858, #444); border: 1px solid #252525; color: #ddd; text-align: center; font: bold 13px/17px "Noto Sans", sans-serif; }
.btn.plus { font-size: 16px; }
.ramp-icons { margin: 6px 0 0 9px; }
.ramp-bar { position: relative; width: 320px; height: 31px; margin-top: 2px; background: #a2a2a2; border: 1px solid #6a6a6a; border-width: 2px 0 1px 1px; }
.ramp-bar i { position: absolute; left: -4px; top: -4px; width: 7px; height: 7px; border-radius: 50%; background: #000; }
.ramp-bar svg { position: absolute; left: -8px; top: 26px; }
.ladder { position: absolute; left: 161px; top: 492px; width: 36px; height: 251px; display: grid; grid-template-rows: repeat(7, 1fr); gap: 1px; padding: 1px; background: #8a8a8a; font-size: 10px; text-align: center; }
.ladder span { background: #121212; display: grid; place-content: center; padding-right: 1px; }
.ladder .hot { background: #b48828; color: #ddd3b0; gap: 5px; }
.ladder b { font-weight: 400; line-height: 14px; }
.cursor { position: absolute; left: 20px; top: 660px; }
```

FILE: grid.js
```js
// Ground-plane grid drawn through a perspective (unit square -> quad) mapping.
(function () {
  var p = [[198.3, 537], [371.7, 624.3], [205, 824], [26.7, 627.3]];
  var dx1 = p[1][0] - p[2][0], dx2 = p[3][0] - p[2][0], sx = p[0][0] - p[1][0] + p[2][0] - p[3][0];
  var dy1 = p[1][1] - p[2][1], dy2 = p[3][1] - p[2][1], sy = p[0][1] - p[1][1] + p[2][1] - p[3][1];
  var det = dx1 * dy2 - dx2 * dy1;
  var g = (sx * dy2 - dx2 * sy) / det, h = (dx1 * sy - sx * dy1) / det;
  var a = p[1][0] - p[0][0] + g * p[1][0], b = p[3][0] - p[0][0] + h * p[3][0];
  var d = p[1][1] - p[0][1] + g * p[1][1], e = p[3][1] - p[0][1] + h * p[3][1];
  function pt(u, v) {
    var w = 1 + g * u + h * v;
    return ((a * u + b * v + p[0][0]) / w).toFixed(1) + ' ' + ((d * u + e * v + p[0][1]) / w).toFixed(1);
  }
  var minor = '', major = '', N = 30;
  for (var i = -N * 5; i <= N * 5; i++) {
    var t = i / 5;
    var vEnd = Math.min(N, (0.15 - 1 - g * t) / h), uEnd = Math.min(N, (0.15 - 1 - h * t) / g);
    var s = '';
    if (vEnd > -N) s += 'M' + pt(t, -N) + 'L' + pt(t, vEnd);
    if (uEnd > -N) s += 'M' + pt(-N, t) + 'L' + pt(uEnd, t);
    if (i % 5 === 0) major += s; else minor += s;
  }
  document.getElementById('minor').setAttribute('d', minor);
  document.getElementById('major').setAttribute('d', major);
})();
```
